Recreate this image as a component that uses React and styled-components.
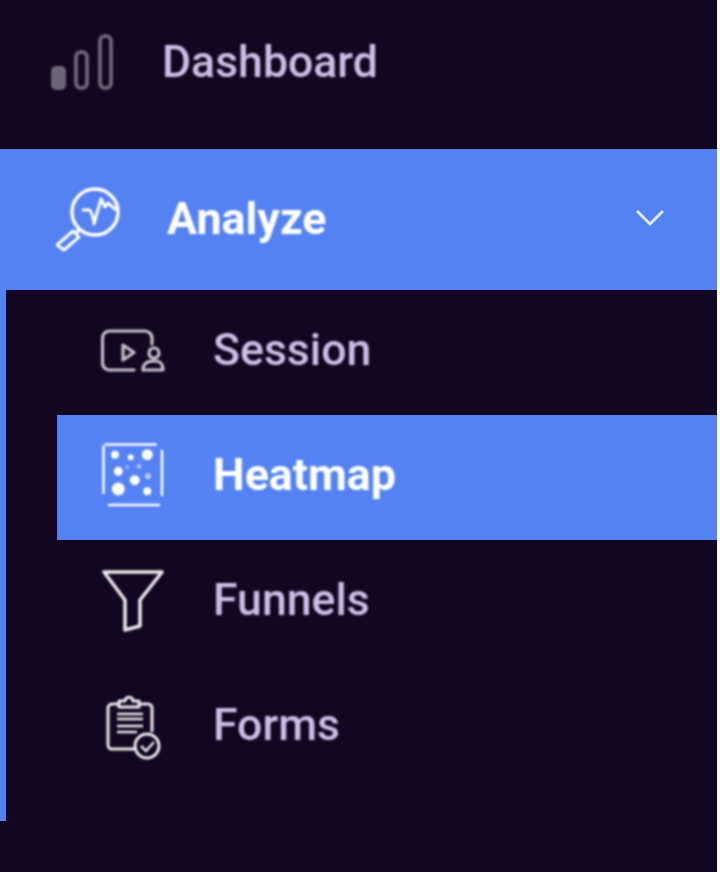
import React from 'react'
import styled, { createGlobalStyle } from 'styled-components'

const GlobalStyle = createGlobalStyle`
  html, body { margin: 0; padding: 0; background: #ffffff; }
  body { font-family: Roboto, "Liberation Sans", sans-serif; }
`

const Sidebar = styled.nav`
  width: 717px;
  height: 872px;
  background: #120620;
  overflow: hidden;
`

const TopRow = styled.div`
  height: 149px;
  display: flex;
  align-items: center;
  padding: 0 0 26px 48px;
  box-sizing: border-box;
  gap: 46px;
`

const ParentRow = styled.div`
  height: 141px;
  background: #5482f2;
  display: flex;
  align-items: center;
  padding: 0 52px 0 56px;
  box-sizing: border-box;
  gap: 43px;
`

const Label = styled.span`
  font-size: ${p => (p.$active ? 44.8 : 44.6)}px;
  line-height: 1;
  font-weight: ${p => (p.$active ? 700 : 500)};
  color: ${p => (p.$active ? '#ffffff' : '#cfbee6')};
  margin-bottom: ${p => p.$lift || 0}px;
  filter: blur(0.8px);
`

const Chevron = styled.svg`
  margin-left: auto;
  margin-bottom: 4px;
  display: block;
  filter: blur(0.5px);
`

const SubMenu = styled.div`
  height: 531px;
  border-left: 6px solid #5482f2;
  box-sizing: border-box;
  display: flex;
  flex-direction: column;
`

const SubRow = styled.div`
  height: 125px;
  margin-left: 51px;
  padding: 0 0 4px 45px;
  box-sizing: border-box;
  display: flex;
  align-items: center;
  gap: 49px;
  background: ${p => (p.$active ? '#5482f2' : 'transparent')};
`

const IconSlot = styled.div`
  width: 62px;
  flex: none;
  display: flex;
  justify-content: center;
`

const IconBox = styled.svg`
  display: block;
  flex: none;
  filter: blur(0.8px);
`

const BarsIcon = () => (
  <IconBox width="68" height="62" viewBox="0 0 68 62" fill="none" stroke="#6e6478" strokeWidth="4">
    <rect x="5" y="37" width="11" height="20" rx="3" fill="#6e6478" />
    <rect x="28" y="21" width="11" height="36" rx="5" />
    <rect x="52" y="5" width="11" height="52" rx="5" />
  </IconBox>
)

const AnalyzeIcon = () => (
  <IconBox width="68" height="68" viewBox="0 0 68 68" fill="none" stroke="#ffffff" strokeWidth="3.5">
    <circle cx="39" cy="26" r="23" />
    <path d="M26 24 H32 Q36 23 38 38 L45 13 L49 21 L52 17 L60 24" strokeWidth="3" strokeLinejoin="round" />
    <path d="M23 44 L20 47" />
    <path d="M1 59 L8 64 L23 51 L17 45 Z" strokeWidth="3" strokeLinejoin="round" />
  </IconBox>
)

const SessionIcon = () => (
  <IconBox width="64" height="44" viewBox="0 0 64 44" fill="none" stroke="#c9c4cf" strokeWidth="3.2" strokeLinejoin="round">
    <path d="M51 15 V9 A7 7 0 0 0 44 2 H8 A7 7 0 0 0 1.5 9 V34 A7 7 0 0 0 8 41 H33" strokeLinecap="round" />
    <path d="M22 16 L33 23.5 L22 31 Z" />
    <circle cx="53" cy="24" r="5" />
    <path d="M42 41 C42 34 47 32 53 32 C59 32 62 34 62 41 Z" />
  </IconBox>
)

const HeatmapIcon = () => (
  <IconBox width="62" height="66" viewBox="0 0 62 66" fill="none">
    <path d="M4 1.5 H54 M1.5 3 V50 M60 8 V52 M7 62 H57" stroke="#ffffff" strokeWidth="2.5" strokeLinecap="round" />
    <g fill="#ffffff">
      <circle cx="13" cy="11.7" r="4" />
      <circle cx="28.7" cy="14.3" r="3" />
      <circle cx="45.3" cy="11.7" r="5.5" />
      <circle cx="16.3" cy="28.3" r="4.5" />
      <circle cx="25.3" cy="24.3" r="2" opacity="0.4" />
      <circle cx="37" cy="23.3" r="2.5" opacity="0.5" />
      <circle cx="32.7" cy="37.3" r="5" />
      <circle cx="46" cy="33.3" r="3" opacity="0.6" />
      <circle cx="16.3" cy="46" r="6.5" />
      <circle cx="45.3" cy="48.3" r="4" />
    </g>
  </IconBox>
)

const FunnelIcon = () => (
  <IconBox width="64" height="64" viewBox="0 0 64 64" fill="none" stroke="#ecebee" strokeWidth="3.5" strokeLinejoin="round">
    <path d="M3 3 H61 L39 31 V57 L24 61 V31 Z" />
  </IconBox>
)

const FormsIcon = () => (
  <IconBox width="56" height="68" viewBox="0 -3 56 68" fill="none" stroke="#ecebee" strokeWidth="3">
    <path d="M29 54 H7 A4 4 0 0 1 3 50 V13 A4 4 0 0 1 7 9 H14 M34 9 H43 A4 4 0 0 1 47 13 V37" />
    <path d="M14 12 V6 H20 C20 1 28 1 28 6 H34 V12 Z" strokeLinejoin="round" />
    <path d="M12 19 H38 M12 24 H38 M12 31 H38 M12 37 H32" strokeWidth="2.4" />
    <circle cx="42" cy="51" r="12" />
    <path d="M36 51 L41 56 L49 47" strokeWidth="2.5" />
  </IconBox>
)

const subItems = [
  { label: 'Session', Icon: SessionIcon },
  { label: 'Heatmap', Icon: HeatmapIcon, active: true },
  { label: 'Funnels', Icon: FunnelIcon },
  { label: 'Forms', Icon: FormsIcon },
]

export default function App() {
  return (
    <>
      <GlobalStyle />
      <Sidebar>
        <TopRow>
          <BarsIcon />
          <Label $lift={-2}>Dashboard</Label>
        </TopRow>
        <ParentRow>
          <AnalyzeIcon />
          <Label $active>Analyze</Label>
          <Chevron width="30" height="20" viewBox="0 0 30 20" fill="none" stroke="#dfe7fc" strokeWidth="3">
            <path d="M2 3 L15 16 L28 3" />
          </Chevron>
        </ParentRow>
        <SubMenu>
          {subItems.map(({ label, Icon, active }) => (
            <SubRow key={label} $active={active}>
              <IconSlot>
                <Icon />
              </IconSlot>
              <Label $active={active}>{label}</Label>
            </SubRow>
          ))}
        </SubMenu>
      </Sidebar>
    </>
  )
}
